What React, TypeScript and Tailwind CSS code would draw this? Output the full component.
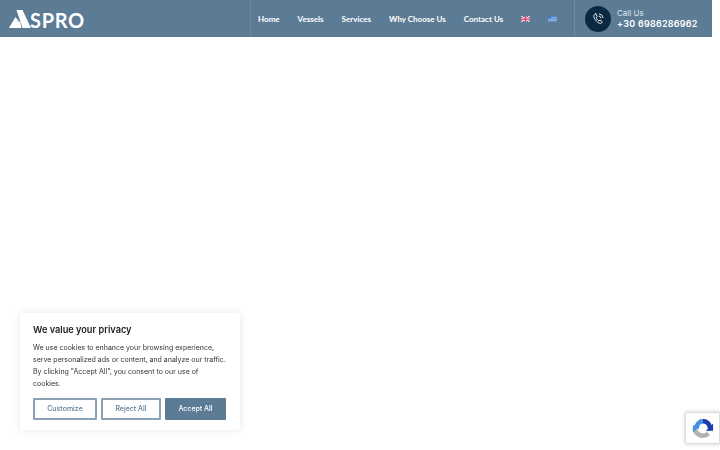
import { useState } from "react"

const navLinks = ["Home", "Vessels", "Services", "Why Choose Us", "Contact Us"]

function UkFlag() {
    return (
        <svg width="9" height="6" viewBox="0 0 18 12">
            <rect width="18" height="12" fill="#3f4f8f" />
            <path d="M0 0L18 12M18 0L0 12" stroke="#f4e6ea" strokeWidth="2.5" />
            <path d="M9 0V12M0 6H18" stroke="#f4e6ea" strokeWidth="4.5" />
            <path d="M9 0V12M0 6H18" stroke="#e0365f" strokeWidth="2.5" />
        </svg>
    )
}

function GreekFlag() {
    return (
        <svg width="9" height="6" viewBox="0 0 18 12">
            <rect width="18" height="12" fill="#4f86c6" />
            <path d="M0 3.5H18M0 6.5H18M0 9.5H18" stroke="#b9d2ec" strokeWidth="1.3" />
            <rect width="6" height="5" fill="#3f78bd" />
        </svg>
    )
}

function PhoneIcon() {
    return (
        <svg width="13" height="13" viewBox="0 0 24 24" fill="none" stroke="white" strokeWidth="1.6" strokeLinecap="round" strokeLinejoin="round">
            <path d="M7 3.5 4.5 5C3 6 3 8 4 10.5c1.5 3.8 5.5 8.5 9 10 2 .8 3.8 .8 5-.8l1-1.7-4.2-3-1.8 1.5c-2-1-4.3-3.8-5.2-6l1.8-1.5L7 3.5Z" />
            <path d="M13 7.5a4 4 0 0 1 3.5 3.5" />
            <path d="M13.5 3.5a8 8 0 0 1 7 7" />
        </svg>
    )
}

function Header() {
    return (
        <header className="flex h-[37px] w-[712px] items-stretch bg-[#5c7b95] text-white">
            <div className="flex w-[251px] items-center border-r border-[#6c8aa2] pl-[9px]">
                <svg width="22" height="18" viewBox="0 0 22 18" className="mt-px">
                    <path d="M7.5 0h6L22 18h-8.500L7.5 0Z" fill="white" />
                    <path d="M6.5 7 10 11.5H7.5L6 18H0Z" fill="white" />
                    <path d="M0 18 6.5 11.5H11L12.500 18Z" fill="white" />
                </svg>
                <span className="mt-[3px] ml-[-1px] font-['Lato',sans-serif] text-[20px] leading-none font-bold tracking-[0.7px]">SPRO</span>
            </div>
            <nav className="flex w-[323px] items-center gap-[18px] pt-px pl-[7px] font-['Lato',sans-serif] text-[8px] font-bold">
                {navLinks.map((link) => (
                    <a key={link} href="#" className="whitespace-nowrap">
                        {link}
                    </a>
                ))}
                <span className="flex items-center gap-[18px]">
                    <UkFlag />
                    <GreekFlag />
                </span>
            </nav>
            <div className="flex flex-1 items-center gap-[6px] border-l border-[#6c8aa2] pl-[10px]">
                <div className="flex size-[26px] items-center justify-center rounded-full bg-[#0b2a42]">
                    <PhoneIcon />
                </div>
                <div className="font-['Inter',sans-serif] leading-none">
                    <div className="text-[8px] text-[#dde6ec]">Call Us</div>
                    <div className="mt-[2px] text-[9px] font-semibold tracking-[0.25px]">+30 6986286962</div>
                </div>
            </div>
        </header>
    )
}

function CookieBanner() {
    const [open, setOpen] = useState(true)
    if (!open) return null
    return (
        <div className="fixed bottom-[20px] left-[20px] w-[220px] rounded-[3px] bg-white px-[13px] pt-[10px] pb-[10px] font-['Inter',sans-serif] shadow-[0_0_8px_rgba(0,0,0,0.1)]">
            <p className="text-[9.2px] leading-[14px] font-semibold text-[#212121]">We value your privacy</p>
            <p className="mt-[5px] text-[7px] leading-[12px] text-[#333]">
                We use cookies to enhance your browsing experience, serve personalized ads or content, and analyze our traffic. By clicking "Accept All", you consent to our use of cookies.
            </p>
            <div className="mt-[8px] flex gap-[4px] text-[7px] font-medium">
                <button onClick={() => setOpen(false)} className="h-[22px] w-[64px] rounded-[1px] border-2 border-[#8ba1b3] text-[#5c7b95]">
                    Customize
                </button>
                <button onClick={() => setOpen(false)} className="h-[22px] w-[60px] rounded-[1px] border-2 border-[#8ba1b3] text-[#5c7b95]">
                    Reject All
                </button>
                <button onClick={() => setOpen(false)} className="h-[22px] w-[61px] rounded-[1px] border-2 border-[#5c7b95] bg-[#5c7b95] text-white">
                    Accept All
                </button>
            </div>
        </div>
    )
}

function RecaptchaBadge() {
    return (
        <div className="fixed right-0 bottom-[6px] flex h-[32px] w-[35px] items-center rounded-l-[2px] border border-[#dcdcdc] bg-white pl-[6px] shadow-[0_0_4px_rgba(0,0,0,0.2)]">
            <svg width="22" height="22" viewBox="0 0 24 24" fill="none" strokeWidth="5">
                <path d="M5 13V12A7.5 7.5 0 0 1 12 4.5" stroke="#4a90e2" />
                <path d="M12 4.5A7.5 7.5 0 0 1 19.5 12" stroke="#1c3aa9" />
                <path d="M3 12A9 9 0 0 0 18 18" stroke="#b3b3b3" />
                <path d="M1 9h8l-8 8Z" fill="#4a90e2" stroke="none" />
                <path d="M23 15h-8l8-8Z" fill="#1c3aa9" stroke="none" />
            </svg>
        </div>
    )
}

export default function App() {
    return (
        <div className="h-[450px] w-full overflow-hidden bg-white">
            <Header />
            <CookieBanner />
            <RecaptchaBadge />
        </div>
    )
}
